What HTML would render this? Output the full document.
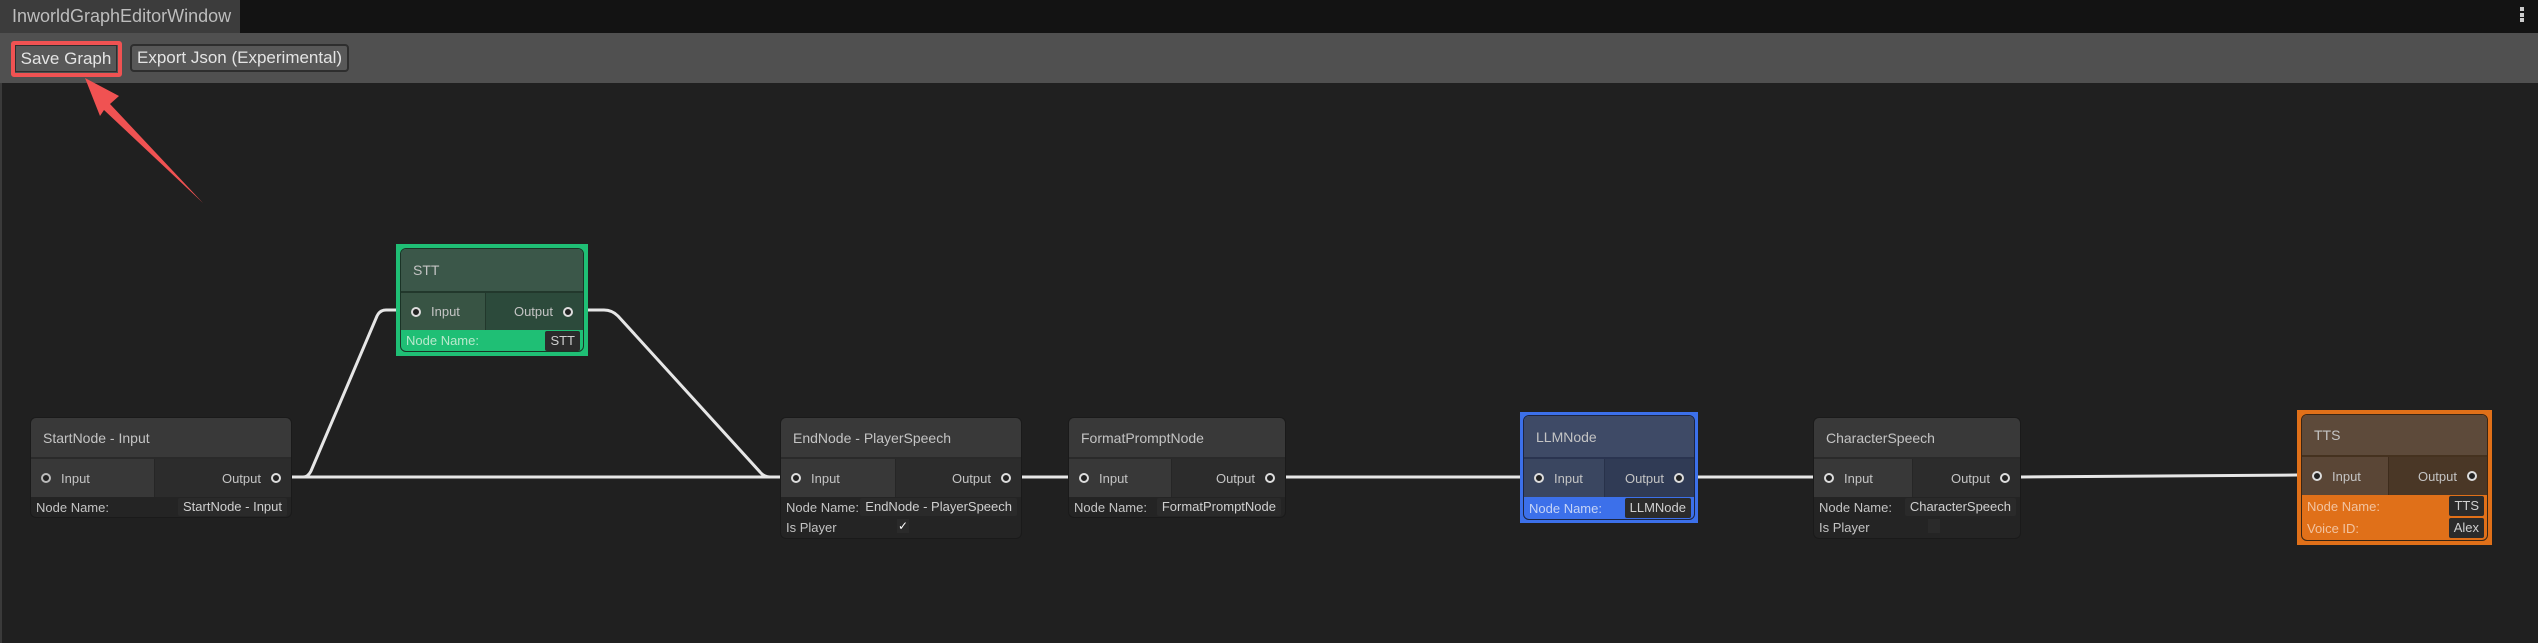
<!DOCTYPE html>
<html><head><meta charset="utf-8"><style>
*{box-sizing:border-box;margin:0;padding:0}
body{width:2538px;height:642px;background:#202020;position:relative;overflow:hidden;font-family:"Liberation Sans",sans-serif;color:#c4c4c4;font-size:13px}
.a{position:absolute}
.node{position:absolute;border-radius:6px;overflow:hidden;background:#242424;border:1px solid #1a1a1a}
.hd{position:absolute;left:0;right:0;top:0;background:#393939;border-bottom:2px solid #2a2a2a;padding-left:12px;display:flex;align-items:center;font-size:14px}
.pi,.po{position:absolute;display:flex;align-items:center;font-size:13px}
.pi{left:0;background:#383838;padding-left:10px}
.po{right:0;background:#2c2c2c;justify-content:flex-end;padding-right:10px;border-left:1px solid #262626}
.dot{width:10px;height:10px;border:2px solid #ddd;border-radius:50%;background:#222;display:inline-block}
.pi .dot{margin-right:10px}.po .dot{margin-left:10px}
.fr{position:absolute;left:0;right:0;display:flex;align-items:center;padding-left:5px;font-size:13px}
.val{position:absolute;right:4px;background:#2a2a2a;padding:0 5px;height:19px;line-height:19px;border-radius:2px;color:#d0d0d0}
</style></head><body>
<div class="a" style="left:0;top:0;width:2538px;height:33px;background:#131313"></div>
<div class="a" style="left:0;top:0;width:240px;height:33px;background:#3c3c3c;color:#bdbdbd;font-size:18px;line-height:33px;padding-left:12px">InworldGraphEditorWindow</div>
<div class="a" style="left:2520px;top:7px;width:4px;height:4px;background:#ccc"></div>
<div class="a" style="left:2520px;top:13px;width:4px;height:4px;background:#ccc"></div>
<div class="a" style="left:2520px;top:18px;width:4px;height:4px;background:#ccc"></div>
<div class="a" style="left:0;top:33px;width:2538px;height:50px;background:#505050"></div>
<div class="a" style="left:0;top:83px;width:2px;height:560px;background:#3a3a3a"></div>
<div class="a" style="left:11px;top:41px;width:111px;height:36px;border:4px solid #f05252;border-radius:3px"></div>
<div class="a" style="left:15px;top:45px;width:102px;height:27px;background:#585858;border:1px solid #2e2e2e;color:#e4e4e4;font-size:17px;line-height:25px;text-align:center">Save Graph</div>
<div class="a" style="left:130px;top:44px;width:219px;height:28px;background:#585858;border:2px solid #2e2e2e;border-radius:4px;color:#e4e4e4;font-size:17px;line-height:24px;text-align:center">Export Json (Experimental)</div>

<svg class="a" style="left:0;top:0" width="2538" height="642">
<polygon points="85,78 119,96 110,104 203,203 104,110 100,116" fill="#f05252"/>
<g fill="none" stroke="#e6e6e6" stroke-width="3">
<path d="M292,477 L303,477 Q308,477 311,471 L377,316 Q380,310 386,310 L400,310"/>
<path d="M292,477 L780,477"/>
<path d="M588,310 L604,310 Q612,310 618,316 L760,472 Q764,477 770,477 L780,477"/>
<path d="M1022,477 L1068,477"/>
<path d="M1286,477 L1520,477"/>
<path d="M1698,477 L1813,477"/>
<path d="M2021,477 L2297,475"/>
</g></svg>

<!-- StartNode -->
<div class="node" style="left:30px;top:417px;width:262px;height:101px">
<div class="hd" style="height:41px">StartNode - Input</div>
<div class="pi" style="top:41px;height:38px;width:125px"><span class="dot" style="border-color:#bbb"></span>Input</div>
<div class="po" style="top:41px;height:38px;width:137px">Output<span class="dot"></span></div>
<div class="fr" style="top:79px;height:20px">Node Name:<span class="val" style="height:18px;line-height:18px">StartNode - Input</span></div>
</div>

<!-- STT -->
<div class="a" style="left:396px;top:244px;width:192px;height:112px;background:#1fbf75"></div>
<div class="node" style="left:400px;top:248px;width:184px;height:104px;background:#1fbf75;border-color:#1b3326">
<div class="hd" style="height:44px;background:#3b5749;border-bottom-color:#22382c">STT</div>
<div class="pi" style="top:44px;height:37px;width:86px;background:#385444"><span class="dot"></span>Input</div>
<div class="po" style="top:44px;height:37px;width:98px;background:#2c4a3b;border-left-color:#22382c">Output<span class="dot"></span></div>
<div class="fr" style="top:81px;height:21px;color:#b8e8cc">Node Name:<span class="val" style="right:3px;height:20px;background:#2b2b2b">STT</span></div>
</div>

<!-- EndNode -->
<div class="node" style="left:780px;top:417px;width:242px;height:122px">
<div class="hd" style="height:41px">EndNode - PlayerSpeech</div>
<div class="pi" style="top:41px;height:38px;width:116px"><span class="dot"></span>Input</div>
<div class="po" style="top:41px;height:38px;width:126px">Output<span class="dot"></span></div>
<div class="fr" style="top:79px;height:20px">Node Name:<span class="val" style="height:18px;line-height:18px">EndNode - PlayerSpeech</span></div>
<div class="fr" style="top:99px;height:20px">Is Player<span class="a" style="left:116px;top:2px;width:12px;height:14px;background:#2a2a2a;color:#fff;font-size:12px;line-height:14px;text-align:center">✓</span></div>
</div>

<!-- FormatPrompt -->
<div class="node" style="left:1068px;top:417px;width:218px;height:101px">
<div class="hd" style="height:41px">FormatPromptNode</div>
<div class="pi" style="top:41px;height:38px;width:104px"><span class="dot"></span>Input</div>
<div class="po" style="top:41px;height:38px;width:114px">Output<span class="dot"></span></div>
<div class="fr" style="top:79px;height:20px">Node Name:<span class="val" style="height:18px;line-height:18px">FormatPromptNode</span></div>
</div>

<!-- LLM -->
<div class="a" style="left:1520px;top:412px;width:178px;height:111px;background:#3c70ea"></div>
<div class="node" style="left:1523px;top:415px;width:172px;height:105px;background:#3c70ea;border-color:#1c2540">
<div class="hd" style="height:43px;background:#3e4a66;border-bottom-color:#2a3450">LLMNode</div>
<div class="pi" style="top:43px;height:38px;width:82px;background:#3a4660"><span class="dot"></span>Input</div>
<div class="po" style="top:43px;height:38px;width:90px;background:#303b55;border-left-color:#28324a">Output<span class="dot"></span></div>
<div class="fr" style="top:81px;height:22px;color:#c6d4f6">Node Name:<span class="val" style="right:3px;height:20px;background:#2b2b2b">LLMNode</span></div>
</div>

<!-- CharacterSpeech -->
<div class="node" style="left:1813px;top:417px;width:208px;height:122px">
<div class="hd" style="height:41px">CharacterSpeech</div>
<div class="pi" style="top:41px;height:38px;width:100px"><span class="dot"></span>Input</div>
<div class="po" style="top:41px;height:38px;width:108px">Output<span class="dot"></span></div>
<div class="fr" style="top:79px;height:20px">Node Name:<span class="val" style="height:18px;line-height:18px">CharacterSpeech</span></div>
<div class="fr" style="top:99px;height:20px">Is Player<span class="a" style="left:114px;top:2px;width:12px;height:14px;background:#2a2a2a"></span></div>
</div>

<!-- TTS -->
<div class="a" style="left:2297px;top:410px;width:195px;height:135px;background:#e07019"></div>
<div class="node" style="left:2301px;top:414px;width:187px;height:127px;background:#e07019;border-color:#3a2614">
<div class="hd" style="height:42px;background:#5d4a3a;border-bottom-color:#45321f">TTS</div>
<div class="pi" style="top:42px;height:38px;width:88px;background:#5a4636"><span class="dot"></span>Input</div>
<div class="po" style="top:42px;height:38px;width:99px;background:#4a3726;border-left-color:#3e2c1c">Output<span class="dot"></span></div>
<div class="fr" style="top:80px;height:22px;color:#f2c3a0">Node Name:<span class="val" style="right:3px;height:20px;background:#2b2b2b">TTS</span></div>
<div class="fr" style="top:102px;height:22px;color:#f2c3a0">Voice ID:<span class="val" style="right:3px;height:20px;background:#2b2b2b">Alex</span></div>
</div>
</body></html>
